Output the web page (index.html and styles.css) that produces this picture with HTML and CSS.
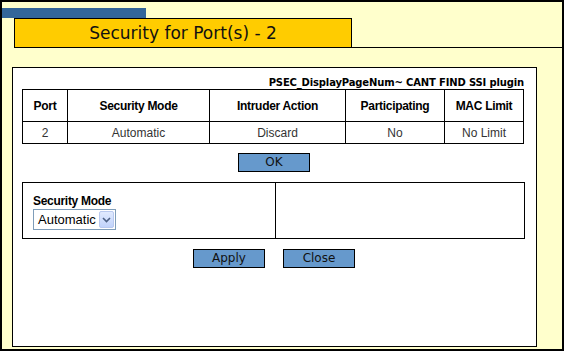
FILE: index.html
```html
<!DOCTYPE html>
<html>
<head>
<meta charset="utf-8">
<link rel="stylesheet" href="styles.css">
</head>
<body>
<div class="frame">
  <div class="bluebar"></div>
  <div class="title-row">
    <div class="title-box">Security for Port(s) - 2</div>
    <div class="title-line"></div>
  </div>
  <div class="panel">
    <div class="pagenum">PSEC_DisplayPageNum~ CANT FIND SSI plugin</div>
    <table class="grid">
      <tr class="head">
        <th class="c1">Port</th>
        <th class="c2">Security Mode</th>
        <th class="c3">Intruder Action</th>
        <th class="c4">Participating</th>
        <th class="c5">MAC Limit</th>
      </tr>
      <tr class="data">
        <td>2</td>
        <td>Automatic</td>
        <td>Discard</td>
        <td>No</td>
        <td>No Limit</td>
      </tr>
    </table>
    <div class="btn-row ok-row"><span class="btn">OK</span></div>
    <table class="form">
      <tr>
        <td class="form-left">
          <div class="label">Security Mode</div>
          <div class="select"><span class="sel-text">Automatic</span><span class="sel-btn"><svg width="9" height="6" viewBox="0 0 9 6"><path d="M1 1 L4.5 4.5 L8 1" fill="none" stroke="#4d6185" stroke-width="1.6"/></svg></span></div>
        </td>
        <td class="form-right"></td>
      </tr>
    </table>
    <div class="btn-row act-row"><span class="btn">Apply</span><span class="btn">Close</span></div>
  </div>
</div>
</body>
</html>
```

FILE: styles.css
```css
html, body {
  margin: 0;
  padding: 0;
}
.frame {
  width: 564px;
  height: 351px;
  box-sizing: border-box;
  border: 2px solid #000;
  background: #ffffcc;
  overflow: hidden;
}
.bluebar {
  margin-top: 6px;
  width: 144px;
  height: 10px;
  background: #336699;
}
.title-row {
  display: flex;
  align-items: flex-end;
}
.title-box {
  margin-left: 12px;
  width: 338px;
  height: 30px;
  box-sizing: border-box;
  border: 1px solid #000;
  background: #ffcc00;
  font-family: "DejaVu Sans", Verdana, sans-serif;
  font-size: 17px;
  line-height: 28px;
  text-align: center;
  color: #111;
}
.title-line {
  flex: 1;
  border-bottom: 1px solid #000;
}
.panel {
  margin: 19px 0 0 10px;
  width: 525px;
  height: 280px;
  box-sizing: border-box;
  border: 1px solid #000;
  background: #fff;
  padding: 0 12px 0 9px;
}
.pagenum {
  margin-top: 9px;
  text-align: right;
  font-family: "DejaVu Sans", Verdana, sans-serif;
  font-weight: bold;
  font-size: 10px;
  line-height: 12px;
  letter-spacing: -0.15px;
  color: #000;
}
.grid {
  width: 502px;
  border-collapse: collapse;
  font-family: "Liberation Sans", Arial, sans-serif;
  font-size: 12px;
}
.grid th, .grid td {
  border: 1px solid #000;
  padding: 0;
  text-align: center;
}
.grid th {
  height: 31px;
  font-weight: bold;
  color: #000;
  letter-spacing: -0.3px;
}
.grid td {
  height: 21px;
  color: #333;
}
.c1 { width: 44px; }
.c2 { width: 141px; }
.c3 { width: 135px; }
.c4 { width: 98px; }
.btn-row {
  display: flex;
  justify-content: center;
}
.ok-row {
  margin-top: 9px;
  padding-left: 2px;
}
.btn {
  display: block;
  width: 72px;
  height: 19px;
  box-sizing: border-box;
  border: 1px solid #000;
  background: #6699cc;
  font-family: "DejaVu Sans", Verdana, sans-serif;
  font-size: 12px;
  line-height: 17px;
  text-align: center;
  color: #111;
}
.form {
  margin-top: 10px;
  width: 503px;
  height: 57px;
  border-collapse: collapse;
}
.form td {
  border: 1px solid #000;
  padding: 0;
  vertical-align: top;
}
.form-left {
  width: 242px;
  padding: 11px 0 0 10px !important;
}
.label {
  font-family: "Liberation Sans", Arial, sans-serif;
  font-size: 12px;
  font-weight: bold;
  letter-spacing: -0.3px;
  line-height: 14px;
  color: #000;
}
.select {
  margin-top: 1px;
  width: 83px;
  height: 21px;
  box-sizing: border-box;
  border: 1px solid #7f9db9;
  display: flex;
  align-items: center;
  padding: 1px;
}
.sel-text {
  flex: 1;
  font-family: "Liberation Sans", Arial, sans-serif;
  font-size: 13px;
  padding-left: 3px;
  color: #000;
}
.sel-btn {
  width: 15px;
  height: 17px;
  box-sizing: border-box;
  border: 1px solid #b9c9ef;
  border-radius: 2px;
  background: linear-gradient(#e1eafe, #c1d3fb);
  display: flex;
  align-items: center;
  justify-content: center;
}
.act-row {
  margin-top: 10px;
  gap: 18px;
  padding-left: 2px;
}
.act-row .btn {
  height: 19px;
}
```
